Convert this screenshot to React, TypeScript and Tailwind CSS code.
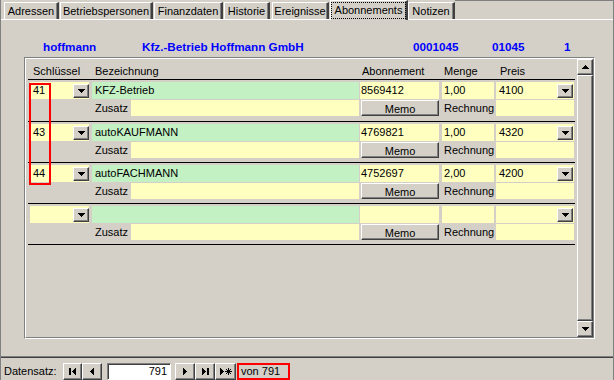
import React from 'react'

const raised =
  'border border-t-white border-l-white border-r-[#404040] border-b-[#404040] shadow-[inset_-1px_-1px_#808080] bg-[#d4d0c8]'

type Dir = 'up' | 'down' | 'left' | 'right'

// small pixel triangles like the classic windows arrows
function Tri({ dir }: { dir: Dir }) {
  if (dir === 'down' || dir === 'up') {
    const rows = dir === 'down' ? [0, 1, 2, 3] : [3, 2, 1, 0]
    return (
      <svg width="7" height="4" viewBox="0 0 7 4" shapeRendering="crispEdges">
        {rows.map((r, i) => (
          <rect key={i} x={r} y={i} width={7 - r * 2} height="1" fill="#000" />
        ))}
      </svg>
    )
  }
  const cols = dir === 'right' ? [0, 1, 2, 3] : [3, 2, 1, 0]
  return (
    <svg width="4" height="7" viewBox="0 0 4 7" shapeRendering="crispEdges">
      {cols.map((c, i) => (
        <rect key={i} x={i} y={c} width="1" height={7 - c * 2} fill="#000" />
      ))}
    </svg>
  )
}

function Bar() {
  return <div className="h-[7px] w-[2px] bg-black" />
}

function Star() {
  return (
    <svg width="7" height="7" viewBox="0 0 7 7" shapeRendering="crispEdges">
      <rect x="3" y="0" width="1" height="7" fill="#000" />
      <rect x="0" y="3" width="7" height="1" fill="#000" />
      <rect x="1" y="1" width="1" height="1" fill="#000" />
      <rect x="5" y="1" width="1" height="1" fill="#000" />
      <rect x="1" y="5" width="1" height="1" fill="#000" />
      <rect x="5" y="5" width="1" height="1" fill="#000" />
      <rect x="2" y="2" width="3" height="3" fill="#000" />
    </svg>
  )
}

function ComboBtn() {
  return (
    <div className={`${raised} mt-[2px] mb-[1px] flex h-[14px] w-[16px] shrink-0 items-center justify-center`}>
      <Tri dir="down" />
    </div>
  )
}

const tabs = [
  { label: 'Adressen', cls: 'ml-[3px] w-[55px]' },
  { label: 'Betriebspersonen', cls: 'ml-[1px] w-[93px]' },
  { label: 'Finanzdaten', cls: 'ml-[1px] w-[69px]' },
  { label: 'Historie', cls: 'ml-[1px] w-[46px]' },
  { label: 'Ereignisse', cls: 'ml-[2px] w-[57px]' },
  { label: 'Abonnements', cls: 'ml-[1px] w-[78px]', active: true },
  { label: 'Notizen', cls: 'w-[47px]' },
]

const records = [
  { key: '41', name: 'KFZ-Betrieb', abo: '8569412', menge: '1,00', preis: '4100' },
  { key: '43', name: 'autoKAUFMANN', abo: '4769821', menge: '1,00', preis: '4320' },
  { key: '44', name: 'autoFACHMANN', abo: '4752697', menge: '2,00', preis: '4200' },
  { key: '', name: '', abo: '', menge: '', preis: '' },
]

function Record({ r, first }: { r: (typeof records)[number]; first: boolean }) {
  return (
    <div className={first ? 'h-[42px] shrink-0' : 'h-[41px] shrink-0'}>
      <div className="ml-[2px] mb-[1px] h-[1px] w-[547px] bg-black" />
      <div className="mt-[2px] flex h-[17px] leading-[17px]">
        <div className="ml-[4px] flex w-[59px] bg-[#ffffc0]">
          <span className="flex-1 pl-[3px]">{r.key}</span>
          <ComboBtn />
        </div>
        <div className="ml-[3px] w-[267px] bg-[#c4f1c4] pl-[3px]">{r.name}</div>
        <div className="ml-[1px] w-[79px] bg-[#ffffc0] pl-[1px]">{r.abo}</div>
        <div className="ml-[3px] w-[52px] bg-[#ffffc0] pl-[2px]">{r.menge}</div>
        <div className="ml-[2px] flex w-[78px] bg-[#ffffc0]">
          <span className="flex-1 pl-[3px]">{r.preis}</span>
          <div className="mr-[1px] flex">
            <ComboBtn />
          </div>
        </div>
      </div>
      <div className="mt-[1px] flex h-[16px] leading-[16px]">
        <span className="ml-[69px] w-[36px]">Zusatz</span>
        <div className="w-[228px] bg-[#ffffc0]" />
        <div className={`${raised} ml-[2px] flex w-[78px] items-center justify-center pt-[2px] leading-none`}>
          Memo
        </div>
        <span className="ml-[5px] w-[52px]">Rechnung</span>
        <div className="w-[78px] bg-[#ffffc0]" />
      </div>
    </div>
  )
}

export default function App() {
  return (
    <div className="flex h-[380px] w-[614px] flex-col overflow-hidden border-l border-r border-[#808080] bg-[#d4d0c8] font-['Liberation_Sans',Arial,sans-serif] text-[11px] leading-none text-black">
      <div className="flex h-[357px] shrink-0 flex-col">
        {/* tab strip */}
        <div className="flex h-[19px] shrink-0 items-end">
          {tabs.map(t =>
            t.active ? (
              <div
                key={t.label}
                className={`${t.cls} relative z-10 mb-[-1px] h-[20px] border-l border-t border-r-2 border-l-white border-t-white border-r-[#404040] bg-[#d4d0c8] shadow-[inset_-1px_0_#808080]`}
              >
                <div className="mt-[1px] flex h-[17px] items-center justify-center border border-dotted border-black">
                  {t.label}
                </div>
              </div>
            ) : (
              <div
                key={t.label}
                className={`${t.cls} flex h-[17px] items-center justify-center border-l border-t border-r-2 border-l-white border-t-white border-r-[#404040] pt-[1px] shadow-[inset_-1px_0_#808080]`}
              >
                {t.label}
              </div>
            )
          )}
          <div className="flex-1 self-stretch border-t border-[#808080]" />
        </div>

        {/* tab page */}
        <div className="flex flex-1 flex-col border-t border-b border-t-white border-b-[#808080]">
          <div className="mt-[19px] flex h-[15px] items-center text-[11.7px] font-bold text-[#0000ff]">
            <span className="ml-[42px] w-[99px]">hoffmann</span>
            <span className="w-[271px]">Kfz.-Betrieb Hoffmann GmbH</span>
            <span className="w-[79px]">0001045</span>
            <span className="w-[72px]">01045</span>
            <span>1</span>
          </div>

          <div className="ml-[23px] mt-[3px] h-[282px] w-[571px] border border-t-[#808080] border-l-[#808080] border-r-white border-b-white">
            <div className="relative flex h-full border border-t-white border-l-white border-r-[#808080] border-b-[#808080]">
              <div className="flex w-[551px] flex-col">
                <div className="flex h-[20px] shrink-0 items-center pt-[4px]">
                  <span className="ml-[7px] w-[62px]">Schlüssel</span>
                  <span className="w-[267px]">Bezeichnung</span>
                  <span className="w-[82px]">Abonnement</span>
                  <span className="w-[56px]">Menge</span>
                  <span>Preis</span>
                </div>
                {records.map((r, i) => (
                  <Record key={i} r={r} first={i === 0} />
                ))}
                <div className="ml-[2px] h-[1px] w-[547px] bg-black" />
              </div>

              {/* vertical scrollbar */}
              <div className="flex w-[16px] flex-col">
                <div className={`${raised} flex h-[16px] items-center justify-center`}>
                  <Tri dir="up" />
                </div>
                <div className={`${raised} flex-1`} />
                <div className={`${raised} flex h-[16px] items-center justify-center`}>
                  <Tri dir="down" />
                </div>
              </div>

              <div className="absolute left-[3px] top-[24px] h-[102px] w-[22px] border-2 border-[#ff0000]" />
            </div>
          </div>
        </div>
      </div>

      {/* record navigation */}
      <div className="flex h-[23px] shrink-0 items-start border-t border-[#404040] pt-[5px]">
        <span className="ml-[3px] w-[59px] pt-[3px]">Datensatz:</span>
        <div className={`${raised} flex h-[17px] w-[19px] items-center justify-center gap-[1px]`}>
          <Bar />
          <Tri dir="left" />
        </div>
        <div className={`${raised} flex h-[17px] w-[20px] items-center justify-center`}>
          <Tri dir="left" />
        </div>
        <div className="ml-[5px] flex h-[17px] w-[64px] items-center justify-end border border-t-[#808080] border-l-[#808080] border-r-white border-b-white bg-white pr-[3px] shadow-[inset_1px_1px_#404040]">
          791
        </div>
        <div className={`${raised} ml-[4px] flex h-[17px] w-[20px] items-center justify-center`}>
          <Tri dir="right" />
        </div>
        <div className={`${raised} flex h-[17px] w-[20px] items-center justify-center gap-[1px]`}>
          <Tri dir="right" />
          <Bar />
        </div>
        <div className={`${raised} flex h-[17px] w-[21px] items-center justify-center gap-[1px]`}>
          <Tri dir="right" />
          <Star />
        </div>
        <div className="ml-[1px] flex h-[17px] w-[53px] items-center border-2 border-[#ff0000] pl-[2px]">
          von 791
        </div>
      </div>
    </div>
  )
}
